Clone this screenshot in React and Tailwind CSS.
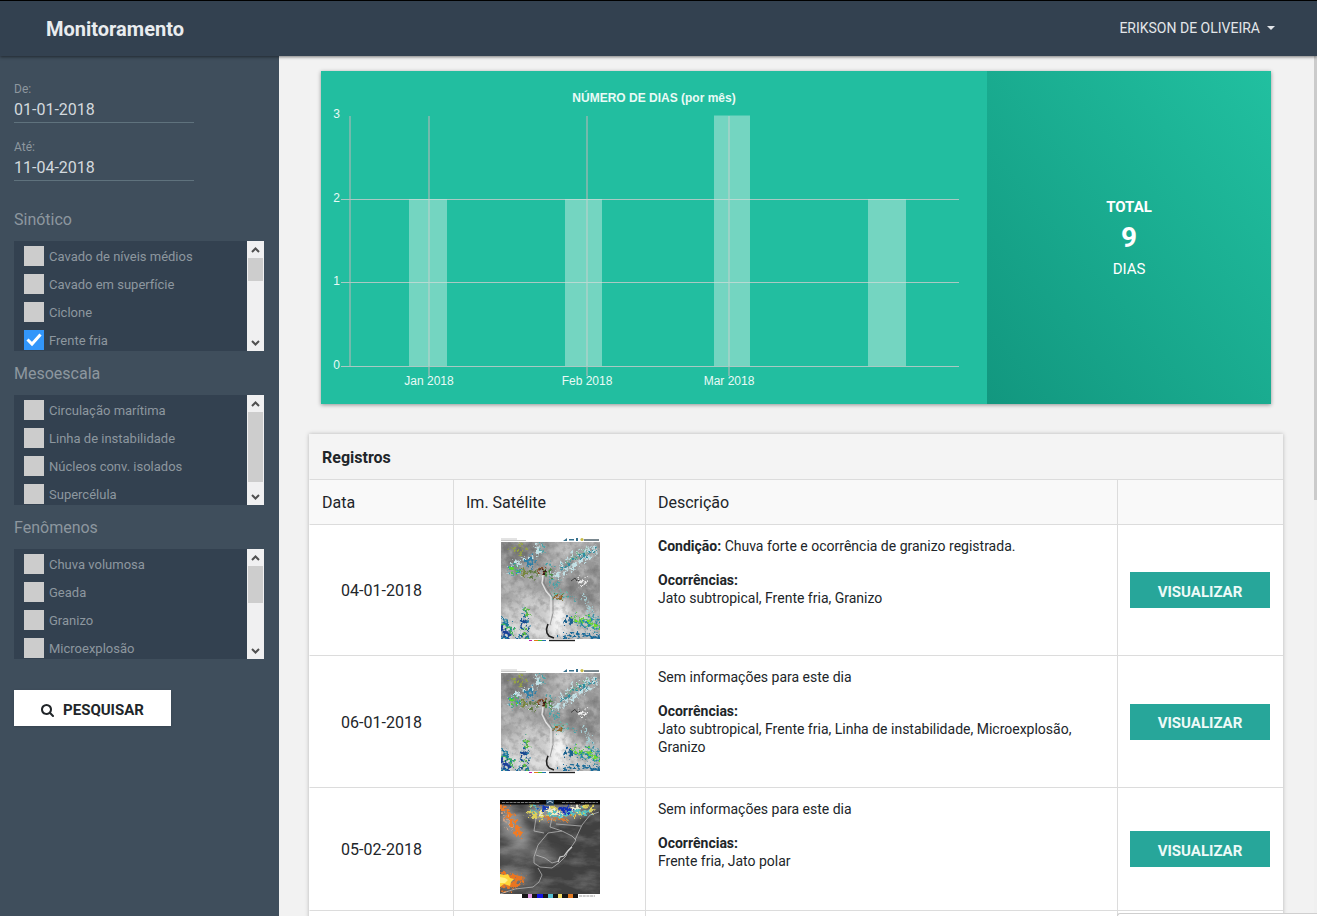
import React, { useState } from "react";

const FILTERS = [
  {
    title: "Sinótico",
    thumb: "h-[23px]",
    items: ["Cavado de níveis médios", "Cavado em superfície", "Ciclone", "Frente fria"],
    checked: ["Frente fria"],
  },
  {
    title: "Mesoescala",
    thumb: "h-[70px]",
    items: ["Circulação marítima", "Linha de instabilidade", "Núcleos conv. isolados", "Supercélula"],
    checked: [],
  },
  {
    title: "Fenômenos",
    thumb: "h-[37px]",
    items: ["Chuva volumosa", "Geada", "Granizo", "Microexplosão"],
    checked: [],
  },
];

const RECORDS = [
  {
    date: "04-01-2018",
    label: "Condição:",
    text: "Chuva forte e ocorrência de granizo registrada.",
    events: "Jato subtropical, Frente fria, Granizo",
    image: <ContinentImage id="sat-a" className="h-[106px]" />,
  },
  {
    date: "06-01-2018",
    text: "Sem informações para este dia",
    events: "Jato subtropical, Frente fria, Linha de instabilidade, Microexplosão, Granizo",
    image: <ContinentImage id="sat-b" className="h-[107px]" />,
  },
  {
    date: "05-02-2018",
    text: "Sem informações para este dia",
    events: "Frente fria, Jato polar",
    image: <RegionImage id="sat-c" />,
  },
];

const BARS = [
  { x: 88, w: 38, value: 2 },
  { x: 244, w: 37, value: 2 },
  { x: 393, w: 36, value: 3 },
  { x: 547, w: 38, value: 2 },
];

const MONTHS = [
  { x: 108, label: "Jan 2018" },
  { x: 266, label: "Feb 2018" },
  { x: 408, label: "Mar 2018" },
];

const LEVELS = [
  { y: 44, label: "3" },
  { y: 128, label: "2" },
  { y: 211, label: "1" },
  { y: 295, label: "0" },
];

function ContinentImage({ id, className }) {
  return (
    <svg viewBox="0 0 100 106" preserveAspectRatio="none" className={`mx-auto block w-[100px] ${className}`} role="img" aria-label="Imagem de satélite">
      <defs>
        <filter id={`${id}-cloud`} x="0" y="0" width="100%" height="100%" colorInterpolationFilters="sRGB">
          <feTurbulence type="fractalNoise" baseFrequency="0.09" numOctaves="5" seed="7" />
          <feColorMatrix values="0 0 0 0 1  0 0 0 0 1  0 0 0 0 1  2.4 0 0 0 -0.95" />
        </filter>
        <filter id={`${id}-shade`} x="0" y="0" width="100%" height="100%" colorInterpolationFilters="sRGB">
          <feTurbulence type="fractalNoise" baseFrequency="0.16" numOctaves="4" seed="21" />
          <feColorMatrix values="0 0 0 0 0.35  0 0 0 0 0.35  0 0 0 0 0.35  2.4 0 0 0 -1.1" />
        </filter>
        <filter id={`${id}-rough`} x="-20%" y="-20%" width="140%" height="140%" colorInterpolationFilters="sRGB">
          <feTurbulence type="fractalNoise" baseFrequency="0.35" numOctaves="3" seed="4" result="n" />
          <feDisplacementMap in="SourceGraphic" in2="n" scale="12" xChannelSelector="R" yChannelSelector="G" result="d" />
          <feTurbulence type="fractalNoise" baseFrequency="0.3" numOctaves="2" seed="15" />
          <feColorMatrix values="0 0 0 0 0  0 0 0 0 0  0 0 0 0 0  0 6 0 0 -2.3" result="holes" />
          <feComposite in="d" in2="holes" operator="in" />
          <feGaussianBlur stdDeviation="0.4" />
        </filter>
        <filter id={`${id}-soft`} x="-30%" y="-30%" width="160%" height="160%">
          <feGaussianBlur stdDeviation="4" />
        </filter>
        <clipPath id={`${id}-clip`}>
          <rect x="1" y="5" width="99" height="97" />
        </clipPath>
      </defs>
      <rect width="100" height="106" fill="#fff" />
      <path d="M1 2h16M1 3.500h25" stroke="#b9b9b9" strokeWidth="0.800" />
      <path d="M63 4l4-3v3zM69 2h5v1.500h-5zM76 1h2v3h-2z" fill="#37708c" />
      <circle cx="82" cy="2.500" r="1.600" fill="#c7bb47" />
      <path d="M84 3h15" stroke="#6b7b83" strokeWidth="1.800" />
      <g clipPath={`url(#${id}-clip)`}>
        <rect x="1" y="5" width="99" height="97" fill="#9a9a9a" />
        <g filter={`url(#${id}-soft)`}>
          <path d="M0 70 30 56 50 66 60 68 88 76 100 74V104H0Z" fill="#c6c6c6" />
          <path d="M52 62 70 66 66 80 60 102 50 100Z" fill="#f4f4f4" />
          <path d="M0 4 38 4 40 20 12 30 0 26Z" fill="#747474" />
          <path d="M58 46 98 28V72L78 70Z" fill="#858585" />
          <path d="M0 40 36 42 38 56 0 62Z" fill="#a9a9a9" />
          <path d="M55 5 76 8 68 18 56 22Z" fill="#c4c4c4" />
          <path d="M0 88 46 84V104H0Z" fill="#d8d8d8" />
        </g>
        <rect x="1" y="5" width="99" height="97" filter={`url(#${id}-cloud)`} opacity="0.3" />
        <rect x="1" y="5" width="99" height="97" filter={`url(#${id}-shade)`} opacity="0.35" />
        <g filter={`url(#${id}-rough)`}>
          <path d="M9 31 20 25 35 19 40 6M8 34 30 37 60 38 78 26 98 14M60 31 76 17 98 10" fill="none" stroke="#c2e1e6" strokeWidth="5" />
          <path d="M62 32 74 22 85 18 98 12" fill="none" stroke="#2d8ea0" strokeWidth="3" />
          <path d="M66 26 78 17 88 13" fill="none" stroke="#7ab08c" strokeWidth="2" />
          <ellipse cx="31" cy="24" rx="5" ry="6" fill="#2f7fa6" />
          <path d="M41 16 44 8 38 5M47 28 55 30M50 44 58 50M66 59 76 61M48 40 60 46" fill="none" stroke="#46a3a8" strokeWidth="2.500" />
          <ellipse cx="14" cy="33" rx="6" ry="5" fill="#2d91a6" />
          <ellipse cx="24" cy="35" rx="4" ry="4.500" fill="#77873c" />
          <ellipse cx="33" cy="37" rx="5" ry="4" fill="#617b43" />
          <ellipse cx="42" cy="34" rx="5" ry="4.500" fill="#88512b" />
          <ellipse cx="48" cy="36" rx="4" ry="4" fill="#498a44" />
          <ellipse cx="59" cy="59" rx="7" ry="5" fill="#64b7a9" />
          <ellipse cx="59" cy="60" rx="5" ry="3" fill="#936329" />
          <path d="M11 14 20 8 25 13 17 18" fill="none" stroke="#95a443" strokeWidth="3" />
          <path d="M0 78 9 84 14 92 8 102 0 104Z" fill="#1d799f" />
          <path d="M0 88 11 94 9 101 0 98Z" fill="#1b4098" />
          <path d="M2 88 11 92 12 98" fill="none" stroke="#48ba58" strokeWidth="3" />
          <path d="M24 68 29 82 28 96 32 105H17L22 89Z" fill="#287da2" />
          <path d="M24 78 28 90 26 101 20 102Z" fill="#194890" />
          <path d="M25 89 24 103M26 70 27 80" stroke="#5dba42" strokeWidth="3" />
          <ellipse cx="69" cy="84" rx="5" ry="4" fill="#1b628f" />
          <path d="M72 76 83 83 91 76 102 84V96L87 92 76 86Z" fill="#2389a4" />
          <path d="M56 103 76 98 102 100" fill="none" stroke="#1c6b99" strokeWidth="4.500" />
          <path d="M84 58 90 73 97 80" fill="none" stroke="#a5cdd2" strokeWidth="3" />
          <path d="M78 43 85 47 86 41" fill="none" stroke="#eee" strokeWidth="4" />
        </g>
        <g filter={`url(#${id}-rough)`}>
          <path d="M74 80 82 85M87 81 94 88 102 90" fill="none" stroke="#74dc2c" strokeWidth="4.500" />
          <ellipse cx="14" cy="33" rx="4" ry="3.500" fill="#5cd62a" />
          <circle cx="43" cy="34" r="2.500" fill="#381c18" />
        </g>
        <path d="M43 38 42 46 46 54 51 60 51 73 50 85 48 91" fill="none" stroke="#e2e2e2" strokeWidth="1.400" />
        <path d="M45 39 44 46 49 54 53 61 53 76 50 88" fill="none" stroke="#777" strokeWidth="0.700" />
        <path d="M71 44 75 41 77 44 80 43" fill="none" stroke="#343434" strokeWidth="0.900" />
        <path d="M48 87 46.500 92 47 96 49 99 54 101" fill="none" stroke="#222" strokeWidth="1.600" />
      </g>
      <path d="M29 103.500h3" stroke="#c21da8" />
      <path d="M34 103.500h4" stroke="#e37e13" />
      <path d="M38 103.500h4" stroke="#45bb32" />
      <path d="M42 103.500h4" stroke="#2374ae" />
      <path d="M49 103.500h26" stroke="#222" strokeWidth="1.400" />
    </svg>
  );
}

function RegionImage({ id }) {
  return (
    <svg viewBox="0 0 100 98" className="mx-auto block h-[98px] w-[100px]" role="img" aria-label="Imagem de satélite">
      <defs>
        <filter id={`${id}-cloud`} x="0" y="0" width="100%" height="100%" colorInterpolationFilters="sRGB">
          <feTurbulence type="fractalNoise" baseFrequency="0.04 0.09" numOctaves="5" seed="11" />
          <feColorMatrix values="0 0 0 0 0.8  0 0 0 0 0.8  0 0 0 0 0.8  2.2 0 0 0 -0.9" />
        </filter>
        <filter id={`${id}-rough`} x="-20%" y="-20%" width="140%" height="140%" colorInterpolationFilters="sRGB">
          <feTurbulence type="fractalNoise" baseFrequency="0.3" numOctaves="3" seed="9" result="n" />
          <feDisplacementMap in="SourceGraphic" in2="n" scale="13" xChannelSelector="R" yChannelSelector="G" result="d" />
          <feTurbulence type="fractalNoise" baseFrequency="0.25" numOctaves="2" seed="3" />
          <feColorMatrix values="0 0 0 0 0  0 0 0 0 0  0 0 0 0 0  0 6 0 0 -2" result="holes" />
          <feComposite in="d" in2="holes" operator="in" />
          <feGaussianBlur stdDeviation="0.4" />
        </filter>
        <filter id={`${id}-soft`} x="-30%" y="-30%" width="160%" height="160%">
          <feGaussianBlur stdDeviation="4" />
        </filter>
        <clipPath id={`${id}-clip`}>
          <rect y="4" width="100" height="90" />
        </clipPath>
      </defs>
      <rect width="100" height="98" fill="#fff" />
      <g clipPath={`url(#${id}-clip)`}>
        <rect width="100" height="94" fill="#404040" />
        <g filter={`url(#${id}-soft)`}>
          <path d="M0 4 14 10 32 34 26 50 0 34Z" fill="#8c8c8c" />
          <path d="M0 48 32 44 60 54 54 62 22 56 0 60Z" fill="#6b6b6b" />
          <path d="M24 4H88L76 20 40 24Z" fill="#8c8c8c" />
          <path d="M0 68 28 70 34 82 0 94Z" fill="#777" />
        </g>
        <rect y="4" width="100" height="90" filter={`url(#${id}-cloud)`} opacity="0.3" />
        <g filter={`url(#${id}-rough)`}>
          <path d="M0 4 9 15 14 25 20 36" fill="none" stroke="#f07b24" strokeWidth="7" />
          <path d="M3 12 12 30" stroke="#c7a18a" strokeWidth="3" />
          <path d="M28 10 42 15 54 10 66 15 79 10 94 7" fill="none" stroke="#ddd05b" strokeWidth="9" />
          <path d="M29 10 44 8 50 15 62 18 77 10 90 12" fill="none" stroke="#55c0c3" strokeWidth="5" />
          <path d="M40 16 49 9 60 14 82 6" fill="none" stroke="#ece9ce" strokeWidth="3" />
          <path d="M46 18 60 20 72 16" fill="none" stroke="#db7831" strokeWidth="3" />
          <path d="M0 70 13 74 27 77 18 86 8 93 0 92Z" fill="#e87522" />
        </g>
        <g filter={`url(#${id}-rough)`}>
          <ellipse cx="66" cy="10" rx="7" ry="4" fill="#1230bc" />
          <ellipse cx="43" cy="8" rx="5" ry="3" fill="#1738b6" />
        </g>
        <path d="M0 74 4 75 8 74 10 78 14 79 11 82 10 86 4 84 0 87Z" fill="#ffd63b" />
        <path d="M0 77 5 78 8 80 5 83 0 83Z" fill="#fff388" />
        <path d="M34 63V57L38 45 48 33 62 31 72 36 76 40 72 46 68 50 66 56 60 62 52 68 40 67 34 63M36 55 45 58 52 63 59 61M38 68 42 75 39 82 33 87 15 89M0 94 15 89M36 18 34 31 44 33M52 18 50 27 62 31M56 24 81 26M75 40 82 25 90 15 99 12" fill="none" stroke="#c2c2c2" strokeWidth="0.700" />
        <path d="M58 62 60 57 64 56 67 52 72 47" fill="none" stroke="#ccc" strokeWidth="1.200" />
      </g>
      <rect width="100" height="4.500" fill="#080808" />
      <path d="M2 2.500h38M62 2.500h13M81 2.500h17" stroke="#7b7b7b" strokeDasharray="3 0.800" />
      <rect x="46" width="8" height="5" fill="#284965" />
      <path d="M47 3 50 1 53 3" fill="none" stroke="#bed0df" />
      <rect x="22" y="94" width="56" height="4" fill="#171717" />
      <rect x="28" y="94" width="4" height="4" fill="#e39be8" />
      <rect x="37" y="94" width="6" height="4" fill="#1414e6" />
      <rect x="48" y="94" width="5" height="4" fill="#55bfd2" />
      <rect x="58" y="94" width="4" height="4" fill="#f4dc65" />
      <rect x="68" y="94" width="5" height="4" fill="#e07820" />
      <path d="M79 96h16" stroke="#999" strokeWidth="1" strokeDasharray="3 0.700" />
    </svg>
  );
}

function ListScrollbar({ thumb }) {
  return (
    <div aria-hidden="true" className="flex w-[17px] flex-col bg-[#f0f0f1]">
      <svg viewBox="0 0 17 17" className="size-[17px]">
        <path d="M5 11 8.500 7.500 12 11" fill="none" stroke="#505050" strokeWidth="2" />
      </svg>
      <div className={`mx-px bg-[#cdcdcd] ${thumb}`} />
      <svg viewBox="0 0 17 17" className="mt-auto size-[17px]">
        <path d="M5 7 8.500 10.500 12 7" fill="none" stroke="#505050" strokeWidth="2" />
      </svg>
    </div>
  );
}

function FilterGroup({ group }) {
  const [checked, setChecked] = useState(group.checked);
  const toggle = (item) =>
    setChecked((list) => (list.includes(item) ? list.filter((i) => i !== item) : [...list, item]));
  return (
    <fieldset>
      <legend className="h-11 text-base leading-[46px] text-[#8d979f]">{group.title}</legend>
      <div className="flex h-[110px] w-[250px] bg-[#334150]">
        <div className="flex flex-1 flex-col gap-2 overflow-hidden px-[10px] pt-[5px]">
          {group.items.map((item) => (
            <label key={item} className="flex h-5 shrink-0 items-center gap-[5px] text-[13px] text-[#8d979f]">
              <span className="grid size-5">
                <input
                  type="checkbox"
                  checked={checked.includes(item)}
                  onChange={() => toggle(item)}
                  className="col-start-1 row-start-1 size-5 appearance-none bg-[#cccccc] checked:bg-[#3296fa]"
                />
                {checked.includes(item) && (
                  <svg viewBox="0 0 20 20" className="pointer-events-none col-start-1 row-start-1 size-5">
                    <path d="M3.500 9.500 8 14 16.500 4.500" fill="none" stroke="#fff" strokeWidth="3" />
                  </svg>
                )}
              </span>
              <span className="pt-0.5">{item}</span>
            </label>
          ))}
        </div>
        <ListScrollbar thumb={group.thumb} />
      </div>
    </fieldset>
  );
}

function DateField({ id, label, value }) {
  return (
    <div className="flex h-[58px] w-[180px] flex-col">
      <label htmlFor={id} className="text-xs leading-[18px] text-[#8d979f]">
        {label}
      </label>
      <input
        id={id}
        defaultValue={value}
        className="h-[25px] w-full border-b border-[#5f727d] bg-transparent pb-0.5 text-base text-[#d3d9de] outline-none"
      />
    </div>
  );
}

function Sidebar() {
  return (
    <aside className="flex w-[279px] shrink-0 flex-col bg-[#3f4e5c] px-[14px] pt-6">
      <DateField id="from" label="De:" value="01-01-2018" />
      <DateField id="to" label="Até:" value="11-04-2018" />
      <div className="mt-px flex flex-col">
        {FILTERS.map((group) => (
          <FilterGroup key={group.title} group={group} />
        ))}
      </div>
      <button
        type="button"
        className="mt-[31px] flex h-9 w-[157px] items-center justify-center gap-2 bg-white pt-1 text-[15px] font-bold text-[#212529] shadow"
      >
        <svg viewBox="0 0 1792 1792" className="size-[14px]" fill="currentColor">
          <path d="M1152 832q0-185-131.500-316.500t-316.500-131.500-316.500 131.500-131.500 316.500 131.500 316.500 316.500 131.500 316.500-131.500 131.500-316.500zm512 832q0 52-38 90t-90 38q-54 0-90-38l-343-342q-179 124-399 124-143 0-273.500-55.500t-225-150-150-225-55.500-273.500 55.500-273.500 150-225 225-150 273.500-55.500 273.500 55.500 225 150 150 225 55.500 273.500q0 220-124 399l343 343q37 37 37 90z" />
        </svg>
        PESQUISAR
      </button>
    </aside>
  );
}

function Chart() {
  return (
    <svg
      viewBox="0 0 666 333"
      className="block h-auto w-full font-['Liberation_Sans',Arial,sans-serif] text-[12px]"
      fill="#e9faf6"
      role="img"
      aria-label="Número de dias por mês"
    >
      <text x="333" y="31" textAnchor="middle" fontWeight="700">
        NÚMERO DE DIAS (por mês)
      </text>
      <g stroke="#8fb9b1" strokeWidth="1.500">
        <path d="M29 45V295" />
        {MONTHS.map((m) => (
          <path key={m.label} d={`M${m.x} 45V305`} />
        ))}
      </g>
      <g stroke="#a9c9c3" strokeWidth="1">
        {LEVELS.slice(1).map((l) => (
          <path key={l.label} d={`M20 ${l.y + 0.5}H638`} />
        ))}
      </g>
      {BARS.map((b) => (
        <rect key={b.x} x={b.x} y={295 - b.value * 83.500} width={b.w} height={b.value * 83.500} fill="#c5ebe2" fillOpacity="0.5" />
      ))}
      {LEVELS.map((l) => (
        <text key={l.label} x="19" y={l.y + 3} textAnchor="end">
          {l.label}
        </text>
      ))}
      {MONTHS.map((m) => (
        <text key={m.label} x={m.x} y="314" textAnchor="middle">
          {m.label}
        </text>
      ))}
    </svg>
  );
}

function Records() {
  return (
    <section className="mt-[30px] bg-white shadow-[0_0_4px_rgba(0,0,0,0.25)]">
      <h2 className="h-[45px] bg-[#f4f4f4] px-[13px] text-base leading-[48px] font-bold text-[#212529]">Registros</h2>
      <table className="w-full table-fixed border-separate border-spacing-0 text-[#212529]">
        <colgroup>
          <col className="w-[144px]" />
          <col className="w-[192px]" />
          <col />
          <col className="w-[166px]" />
        </colgroup>
        <thead>
          <tr className="h-[45px] bg-[#f9f9f9] text-left text-base">
            {["Data", "Im. Satélite", "Descrição", ""].map((h) => (
              <th key={h} className="border-t border-l border-[#dcdcdc] px-3 pt-0.5 font-normal first:border-l-transparent">
                {h}
              </th>
            ))}
          </tr>
        </thead>
        <tbody>
          {RECORDS.map((r) => (
            <tr key={r.date}>
              <td className="border-t border-l border-[#dcdcdc] border-l-transparent px-3 pt-0.5 text-center text-base">{r.date}</td>
              <td className="border-t border-l border-[#dcdcdc] px-3 py-3">{r.image}</td>
              <td className="border-t border-l border-[#dcdcdc] px-3 py-3 align-top text-sm leading-[18px]">
                <p>
                  {r.label && <b>{r.label} </b>}
                  {r.text}
                </p>
                <p className="mt-4 font-bold">Ocorrências:</p>
                <p>{r.events}</p>
              </td>
              <td className="border-t border-l border-[#dcdcdc] px-3">
                <button type="button" className="block h-9 w-[140px] bg-[#27a69a] pt-1 text-[15px] font-bold text-[#eefaf8]">
                  VISUALIZAR
                </button>
              </td>
            </tr>
          ))}
          <tr className="h-32">
            <td className="border-t border-l border-[#dcdcdc] border-l-transparent" />
            <td className="border-t border-l border-[#dcdcdc]" />
            <td className="border-t border-l border-[#dcdcdc]" />
            <td className="border-t border-l border-[#dcdcdc]" />
          </tr>
        </tbody>
      </table>
    </section>
  );
}

export default function App() {
  return (
    <div className="relative flex h-screen flex-col overflow-hidden bg-[#f2f2f2] font-[Roboto,sans-serif]">
      <header className="z-10 flex h-14 shrink-0 items-center justify-between border-t border-black bg-[#334150] pr-[42px] pl-[46px] shadow-[0_1px_3px_rgba(0,0,0,0.5)]">
        <h1 className="text-xl font-bold text-[#e9ecef]">Monitoramento</h1>
        <button type="button" className="flex items-center gap-[7px] pb-0.5 text-sm text-[#e3e6e9]">
          ERIKSON DE OLIVEIRA
          <svg viewBox="0 0 8 4" className="h-1 w-2" fill="currentColor">
            <path d="M0 0H8L4 4Z" />
          </svg>
        </button>
      </header>
      <div className="flex min-h-0 flex-1">
        <Sidebar />
        <main className="min-w-0 flex-1 overflow-hidden pt-[15px] pr-[31px] pl-[30px]">
          <section className="mx-3 flex bg-[#22bea0] shadow-[0_1px_4px_rgba(0,0,0,0.4)]">
            <div className="min-w-0 flex-1">
              <Chart />
            </div>
            <div className="flex w-[284px] flex-col items-center justify-center bg-linear-[50deg] from-[#12977f] to-[#21c0a0] text-[15px] leading-6 text-white">
              <strong>TOTAL</strong>
              <strong className="text-[28px] leading-[38px]">9</strong>
              <span>DIAS</span>
            </div>
          </section>
          <Records />
        </main>
        <div aria-hidden="true" className="w-[3px] bg-[#f0f0f0]">
          <div className="h-[444px] bg-[#cbcbcb]" />
        </div>
      </div>
      <div aria-hidden="true" className="absolute right-0 bottom-0 h-[3px] w-[200px] rounded-tl border-t border-l border-[#cfcfcf] bg-white" />
    </div>
  );
}
